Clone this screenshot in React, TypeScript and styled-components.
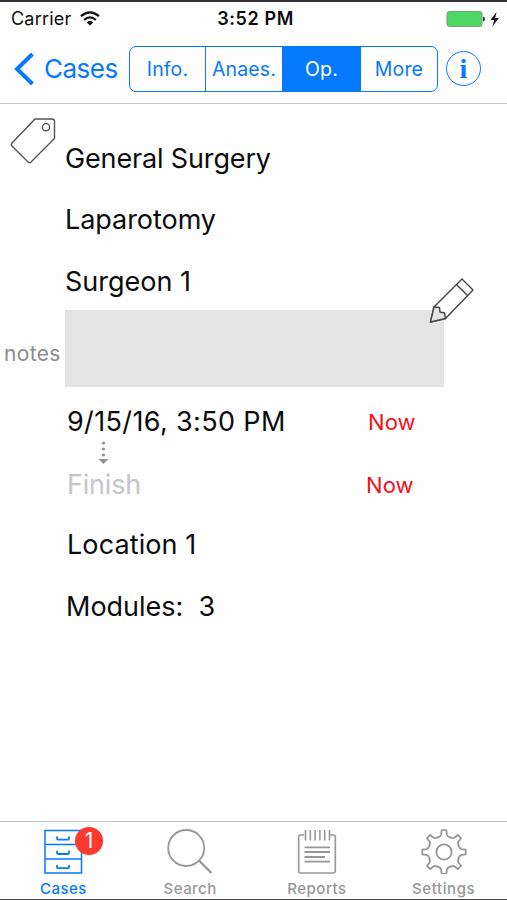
import React from "react";
import styled, { createGlobalStyle } from "styled-components";

const BLUE = "#057aff";
const GRAY = "#979797";

const GlobalStyle = createGlobalStyle`
  * { box-sizing: border-box; }
  body { margin: 0; background: #fff; }
`;

const Screen = styled.div`
  width: 507px;
  height: 900px;
  display: flex;
  flex-direction: column;
  overflow: hidden;
  background: #fefefe;
  border-top: 2px solid #333135;
  border-bottom: 1px solid #4a4a4c;
  font-family: Inter, "Liberation Sans", sans-serif;
  color: #0c0c0c;
  white-space: pre;
`;

const StatusBar = styled.header`
  height: 32px;
  display: grid;
  grid-template-columns: 1fr auto 1fr;
  align-items: center;
  padding: 1px 7px 0 11px;
  font-size: 18px;
  line-height: 32px;
`;

const Carrier = styled.div`
  display: flex;
  align-items: center;
  gap: 9px;
  letter-spacing: 0.2px;
  svg { margin-top: -1px; }
`;

const Clock = styled.div`
  font-weight: 600;
  letter-spacing: 0.6px;
`;

const Power = styled.div`
  display: flex;
  justify-content: flex-end;
  svg { display: block; margin-top: -1px; }
`;

const NavBar = styled.nav`
  height: 70px;
  flex: none;
  display: flex;
  align-items: center;
  padding-left: 14px;
  border-bottom: 1px solid #c4c4c6;
  color: ${BLUE};
`;

const BackButton = styled.div`
  display: flex;
  align-items: center;
  gap: 10px;
  width: 115px;
  font-size: 26px;
  letter-spacing: -0.5px;
  svg { flex: none; }
`;

const Segments = styled.div`
  width: 309px;
  height: 46px;
  display: grid;
  grid-template-columns: 75px 77px 78px 1fr;
  border: 1.5px solid ${BLUE};
  border-radius: 7px;
  overflow: hidden;
`;

const Segment = styled.div<{ $active?: boolean }>`
  display: flex;
  align-items: center;
  justify-content: center;
  font-size: 19.5px;
  letter-spacing: 0.15px;
  color: ${(p) => (p.$active ? "#fff" : BLUE)};
  background: ${(p) => (p.$active ? BLUE : "transparent")};
  & + & { border-left: 1px solid ${BLUE}; }
`;

const InfoButton = styled.div`
  width: 35px;
  height: 35px;
  margin-left: 8px;
  border: 1.8px solid ${BLUE};
  border-radius: 50%;
  display: flex;
  align-items: center;
  justify-content: center;
  font: 700 28px/30px "Liberation Serif", serif;
`;

const Content = styled.main`
  flex: 1;
  padding-top: 14px;
`;

const Row = styled.div<{ $height: number; $indent?: number; $top?: number; $after?: number }>`
  height: ${(p) => p.$height}px;
  display: flex;
  align-items: center;
  padding-left: ${(p) => p.$indent ?? 65}px;
  padding-top: ${(p) => p.$top ?? 0}px;
  margin-bottom: ${(p) => p.$after ?? 0}px;
`;

const TagRow = styled.div`
  height: 71px;
  display: grid;
  grid-template-columns: 65px 1fr;
  svg { margin-left: 9px; }
`;

const Value = styled.span<{ $spacing?: number; $muted?: boolean }>`
  font-size: 27px;
  line-height: 32px;
  letter-spacing: ${(p) => p.$spacing ?? -0.2}px;
  color: ${(p) => (p.$muted ? "#c5c5ca" : "inherit")};
`;

const TagValue = styled(Value)`
  padding-top: 25px;
`;

const TimeCell = styled.div<{ $width: number }>`
  width: ${(p) => p.$width}px;
  display: flex;
`;

const NowButton = styled.span`
  font-size: 22px;
  letter-spacing: 0.1px;
  color: #f5101a;
`;

const Notes = styled.section`
  height: 77px;
  display: grid;
  grid-template-columns: 65px 379px;
  align-items: center;
  position: relative;
`;

const NotesLabel = styled.span`
  padding: 10px 0 0 4px;
  font-size: 21px;
  letter-spacing: 0.35px;
  color: #8c8c8c;
`;

const NotesField = styled.div`
  height: 77px;
  background: #e4e4e4;
`;

const Pencil = styled.svg`
  position: absolute;
  left: 427px;
  top: -34px;
`;

const Arrow = styled.div`
  height: 26px;
  padding-left: 97px;
  svg { display: block; }
`;

const TabBar = styled.footer`
  height: 78px;
  display: grid;
  grid-template-columns: repeat(4, 1fr);
  border-top: 1px solid #c2c2c4;
`;

const Tab = styled.div<{ $active?: boolean }>`
  display: flex;
  flex-direction: column;
  align-items: center;
  padding-top: 6px;
  position: relative;
  color: ${(p) => (p.$active ? BLUE : GRAY)};
  svg { display: block; }
`;

const TabLabel = styled.span<{ $spacing: number }>`
  margin-top: 6px;
  font-size: 15px;
  line-height: 18px;
  font-weight: 500;
  letter-spacing: ${(p) => p.$spacing}px;
`;

const Badge = styled.span`
  position: absolute;
  left: 75px;
  top: 5px;
  width: 28px;
  height: 28px;
  border-radius: 50%;
  background: #fc3a30;
  color: #fff;
  font-size: 21px;
  line-height: 28px;
  text-align: center;
`;

const WifiIcon = () => (
  <svg width="20" height="16" viewBox="0 0 20 16" fill="none" stroke="#111" strokeWidth="2.2">
    <path d="M1 5.2 Q10 -2.6 19 5.2" />
    <path d="M4.1 8.9 Q10 4 15.9 8.9" />
    <path d="M6.7 11.4 Q10 8.8 13.3 11.4 L10 14.6 Z" fill="#111" stroke="none" />
  </svg>
);

const BatteryIcon = () => (
  <svg width="54" height="20" viewBox="0 0 54 20">
    <rect x="1" y="2.5" width="35" height="15" rx="2.5" fill="#4cd863" stroke="#7f9884" strokeWidth="1" />
    <path d="M37 7.5 Q39 8 39 10 Q39 12 37 12.5 Z" fill="#333" />
    <path d="M50.5 3 L44.5 11 H48.3 L46.3 17.5 L53 9 H49.2 Z" fill="#111" />
  </svg>
);

const CabinetIcon = () => (
  <svg width="46" height="46" viewBox="0 0 46 46" fill="none" stroke="currentColor" strokeWidth="1.5">
    <path d="M5 2.5 H41.5 V45 H5 Z M5 16.5 H41.5 M5 31 H41.5" />
    <path d="M17 8.5 V10.4 Q17 11.7 18.3 11.7 H27.7 Q29 11.7 29 10.4 V8.5 M17 22.8 V24.7 Q17 26 18.3 26 H27.7 Q29 26 29 24.7 V22.8 M17 37 V38.9 Q17 40.2 18.3 40.2 H27.7 Q29 40.2 29 38.9 V37" strokeWidth="1.8" />
  </svg>
);

const SearchIcon = () => (
  <svg width="46" height="46" viewBox="0 0 46 46" fill="none" stroke="currentColor" strokeWidth="1.8">
    <circle cx="19.2" cy="20" r="18" />
    <path d="M31.5 32 L44.5 45" strokeWidth="2.2" />
  </svg>
);

const ReportIcon = () => (
  <svg width="46" height="46" viewBox="0 0 46 46" fill="none" stroke="currentColor" strokeWidth="1.6">
    <path d="M10 7 H6.7 Q4.7 7 4.7 9 V43 Q4.7 45 6.7 45 H39.3 Q41.3 45 41.3 43 V9 Q41.3 7 39.3 7 H36" />
    <path d="M11.5 2 V12.5 M16.3 2 V12.5 M21.1 2 V12.5 M25.9 2 V12.5 M30.7 2 V12.5 M35.5 2 V12.5" />
    <path d="M10.5 19.3 H36 M10.5 24 H36 M10.5 29 H31 M10.5 33.7 H36" strokeWidth="1.8" />
  </svg>
);

const polar = (radius: number, degrees: number) => {
  const a = ((degrees - 90) * Math.PI) / 180;
  return `${(23 + radius * Math.cos(a)).toFixed(2)} ${(24 + radius * Math.sin(a)).toFixed(2)}`;
};

const gearPath =
  Array.from({ length: 8 }, (_, i) => {
    const c = i * 45;
    return `${i ? "L" : "M"}${polar(21.9, c - 6)} L${polar(21.9, c + 6)} L${polar(17.6, c + 9.5)} C${polar(15.6, c + 13)} ${polar(15.6, c + 32)} ${polar(17.6, c + 35.5)}`;
  }).join(" ") + " Z";

const GearIcon = () => (
  <svg width="46" height="46" viewBox="0 0 46 46" fill="none" stroke="currentColor" strokeWidth="1.8" strokeLinejoin="round">
    <path d={gearPath} />
    <circle cx="23" cy="24" r="7.6" />
  </svg>
);

export default function App() {
  return (
    <>
      <GlobalStyle />
      <Screen>
        <StatusBar>
          <Carrier>Carrier<WifiIcon /></Carrier>
          <Clock>3:52 PM</Clock>
          <Power><BatteryIcon /></Power>
        </StatusBar>
        <NavBar>
          <BackButton>
            <svg width="20" height="34" viewBox="0 0 20 34" fill="none" stroke={BLUE} strokeWidth="4">
              <path d="M18.5 2 L3 17 L18.5 32" />
            </svg>
            Cases
          </BackButton>
          <Segments>
            <Segment>Info.</Segment>
            <Segment>Anaes.</Segment>
            <Segment $active>Op.</Segment>
            <Segment>More</Segment>
          </Segments>
          <InfoButton>i</InfoButton>
        </NavBar>
        <Content>
          <TagRow>
            <svg width="48" height="48" viewBox="0 0 48 48" fill="none" stroke="#555" strokeWidth="1.4">
              <path d="M26 1 H43 Q45.5 1 45.5 3.5 V20.5 L22 44 Q20.5 45.3 19 44 L3 28 Q1.5 26.5 3 25 Z" />
              <circle cx="37" cy="9.2" r="3.6" />
            </svg>
            <TagValue $spacing={-0.15}>General Surgery</TagValue>
          </TagRow>
          <Row $height={61}><Value $spacing={-0.05}>Laparotomy</Value></Row>
          <Row $height={60} $top={3}><Value $spacing={0}>Surgeon 1</Value></Row>
          <Notes>
            <NotesLabel>notes</NotesLabel>
            <NotesField />
            <Pencil width="48" height="48" viewBox="0 0 48 48" fill="none" stroke="#444" strokeWidth="1.4" strokeLinejoin="round">
              <path d="M7 31 L35 3 L46 14 L18.5 42.5 L3.5 46 Z" fill="#fff" />
              <path d="M7 31 L12.5 31.5 L13 36 L17.5 37 L18.5 42.5 L3.5 46 Z" fill="#e4e4e4" />
              <path d="M29.5 8.5 L40.5 19.5" />
            </Pencil>
          </Notes>
          <Row $height={54} $indent={67} $top={16}>
            <TimeCell $width={301}><Value $spacing={0.36}>9/15/16, 3:50 PM</Value></TimeCell>
            <NowButton>Now</NowButton>
          </Row>
          <Arrow>
            <svg width="14" height="26" viewBox="0 0 14 26" fill="#929292">
              <circle cx="6.5" cy="2" r="1.6" />
              <circle cx="6.5" cy="8" r="1.6" />
              <circle cx="6.5" cy="14" r="1.6" />
              <path d="M1.5 18 H11.5 L6.5 23 Z" />
            </svg>
          </Arrow>
          <Row $height={35} $indent={67} $after={12}>
            <TimeCell $width={299}><Value $muted>Finish</Value></TimeCell>
            <NowButton>Now</NowButton>
          </Row>
          <Row $height={62} $indent={67}><Value $spacing={0.1}>Location 1</Value></Row>
          <Row $height={62} $indent={66}><Value $spacing={0}>Modules:  3</Value></Row>
        </Content>
        <TabBar>
          <Tab $active><CabinetIcon /><Badge>1</Badge><TabLabel $spacing={0.5}>Cases</TabLabel></Tab>
          <Tab><SearchIcon /><TabLabel $spacing={0.45}>Search</TabLabel></Tab>
          <Tab><ReportIcon /><TabLabel $spacing={0.5}>Reports</TabLabel></Tab>
          <Tab><GearIcon /><TabLabel $spacing={0.6}>Settings</TabLabel></Tab>
        </TabBar>
      </Screen>
    </>
  );
}
